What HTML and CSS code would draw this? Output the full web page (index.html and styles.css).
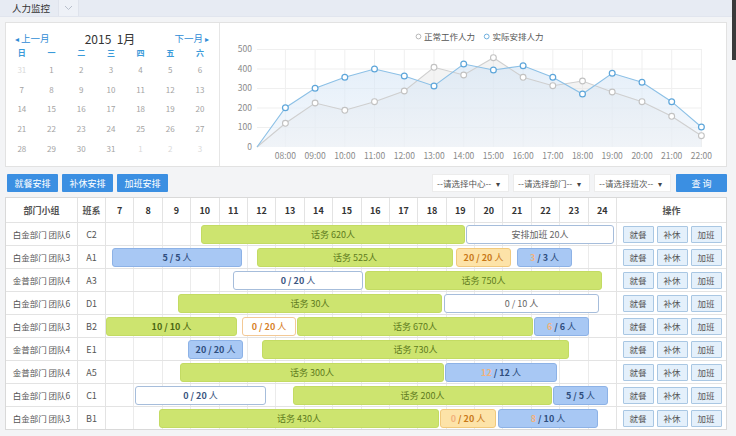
FILE: index.html
```html
<!DOCTYPE html>
<html lang="zh-CN">
<head>
<meta charset="utf-8">
<title>人力监控</title>
<link rel="stylesheet" href="styles.css">
</head>
<body>
<div class="topbar">
  <div class="tab">人力监控</div>
  <div class="tab-more">
    <svg width="9" height="6" viewBox="0 0 9 6"><path d="M1 1l3.5 3.5L8 1" fill="none" stroke="#b9c0cc" stroke-width="1"/></svg>
  </div>
</div>
<div class="scroll-thumb"></div>

<div class="main">
  <section class="panel">
    <div class="calendar">
      <div class="cal-head">
        <span class="cal-nav"><span class="arr">◂</span>上一月</span>
        <span class="cal-title">2015&nbsp; 1月</span>
        <span class="cal-nav">下一月<span class="arr">▸</span></span>
      </div>
      <div class="cal-grid cal-week">
        <span>日</span><span>一</span><span>二</span><span>三</span><span>四</span><span>五</span><span>六</span>
      </div>
      <div class="cal-grid cal-days">
        <span class="other">31</span><span>1</span><span>2</span><span>3</span><span>4</span><span>5</span><span>6</span>
        <span>7</span><span>8</span><span>9</span><span>10</span><span>11</span><span>12</span><span>13</span>
        <span>14</span><span>15</span><span>16</span><span>17</span><span>18</span><span>19</span><span>20</span>
        <span>21</span><span>22</span><span>23</span><span>24</span><span>25</span><span>26</span><span>27</span>
        <span>28</span><span>29</span><span>30</span><span>31</span><span class="other">1</span><span class="other">2</span><span class="other">3</span>
      </div>
    </div>
    <div class="chart">
      <svg class="chart-svg" width="506" height="143" viewBox="220 23 506 143">
        <defs>
          <linearGradient id="areaBlue" x1="0" y1="0" x2="0" y2="1">
            <stop offset="0" stop-color="#d3e4f5"/>
            <stop offset="1" stop-color="#eef4fb"/>
          </linearGradient>
        </defs>
        <!-- legend -->
        <circle cx="418.5" cy="36.5" r="2.4" fill="#fff" stroke="#b8b8b8" stroke-width="1"/>
        <text class="legend" x="424" y="39.7">正常工作人力</text>
        <circle cx="486.7" cy="36.5" r="2.4" fill="#fff" stroke="#6fb0df" stroke-width="1"/>
        <text class="legend" x="492.5" y="39.7">实际安排人力</text>
        <!-- grid -->
        <g stroke="#efefef" stroke-width="1" fill="none">
          <path d="M257 49.5H702M257 69H702M257 88.5H702M257 108H702M257 127.5H702"/>
          <path d="M285.4 49.5V147M315.1 49.5V147M344.8 49.5V147M374.5 49.5V147M404.3 49.5V147M434 49.5V147M463.7 49.5V147M493.4 49.5V147M523.1 49.5V147M552.8 49.5V147M582.5 49.5V147M612.2 49.5V147M642 49.5V147M671.7 49.5V147M701.4 49.5V147"/>
        </g>
        <!-- y axis -->
        <g class="axis" text-anchor="end">
          <text x="252" y="52.3">500</text>
          <text x="252" y="71.8">400</text>
          <text x="252" y="91.3">300</text>
          <text x="252" y="110.8">200</text>
          <text x="252" y="130.3">100</text>
          <text x="252" y="149.8">0</text>
        </g>
        <!-- x axis -->
        <g class="axis" text-anchor="middle">
          <text x="285.4" y="158.8">08:00</text>
          <text x="315.1" y="158.8">09:00</text>
          <text x="344.8" y="158.8">10:00</text>
          <text x="374.5" y="158.8">11:00</text>
          <text x="404.3" y="158.8">12:00</text>
          <text x="434" y="158.8">13:00</text>
          <text x="463.7" y="158.8">14:00</text>
          <text x="493.4" y="158.8">15:00</text>
          <text x="523.1" y="158.8">16:00</text>
          <text x="552.8" y="158.8">17:00</text>
          <text x="582.5" y="158.8">18:00</text>
          <text x="612.2" y="158.8">19:00</text>
          <text x="642" y="158.8">20:00</text>
          <text x="671.7" y="158.8">21:00</text>
          <text x="701.4" y="158.8">22:00</text>
        </g>
        <!-- normal workforce (gray) -->
        <polygon fill="#e4e4e4" fill-opacity="0.45" points="257,147 285.4,123.3 315.1,103 344.8,110.3 374.5,101.7 404.3,91 434,67.3 463.7,75 493.4,57.7 523.1,77.3 552.8,85.7 582.5,81 612.2,92 642,101.7 671.7,116.3 701.4,135.7 701.4,147"/>
        <!-- scheduled workforce (blue) -->
        <polygon fill="url(#areaBlue)" fill-opacity="0.6" points="257,147 285.4,107.7 315.1,88.3 344.8,77.3 374.5,69 404.3,76 434,86 463.7,64 493.4,70 523.1,65.7 552.8,77.3 582.5,94 612.2,73.3 642,82.3 671.7,101.7 701.4,127 701.4,147"/>
        <polyline fill="none" stroke="#cfcfcf" stroke-width="1.1" points="257,147 285.4,123.3 315.1,103 344.8,110.3 374.5,101.7 404.3,91 434,67.3 463.7,75 493.4,57.7 523.1,77.3 552.8,85.7 582.5,81 612.2,92 642,101.7 671.7,116.3 701.4,135.7"/>
        <polyline fill="none" stroke="#8cc0e6" stroke-width="1.1" points="257,147 285.4,107.7 315.1,88.3 344.8,77.3 374.5,69 404.3,76 434,86 463.7,64 493.4,70 523.1,65.7 552.8,77.3 582.5,94 612.2,73.3 642,82.3 671.7,101.7 701.4,127"/>
        <g fill="#fff" stroke="#c2c2c2" stroke-width="1.1">
          <circle cx="285.4" cy="123.3" r="2.9"/><circle cx="315.1" cy="103" r="2.9"/><circle cx="344.8" cy="110.3" r="2.9"/>
          <circle cx="374.5" cy="101.7" r="2.9"/><circle cx="404.3" cy="91" r="2.9"/><circle cx="434" cy="67.3" r="2.9"/>
          <circle cx="463.7" cy="75" r="2.9"/><circle cx="493.4" cy="57.7" r="2.9"/><circle cx="523.1" cy="77.3" r="2.9"/>
          <circle cx="552.8" cy="85.7" r="2.9"/><circle cx="582.5" cy="81" r="2.9"/><circle cx="612.2" cy="92" r="2.9"/>
          <circle cx="642" cy="101.7" r="2.9"/><circle cx="671.7" cy="116.3" r="2.9"/><circle cx="701.4" cy="135.7" r="2.9"/>
        </g>
        <g fill="#fff" stroke="#5ea6da" stroke-width="1.2">
          <circle cx="285.4" cy="107.7" r="2.9"/><circle cx="315.1" cy="88.3" r="2.9"/><circle cx="344.8" cy="77.3" r="2.9"/>
          <circle cx="374.5" cy="69" r="2.9"/><circle cx="404.3" cy="76" r="2.9"/><circle cx="434" cy="86" r="2.9"/>
          <circle cx="463.7" cy="64" r="2.9"/><circle cx="493.4" cy="70" r="2.9"/><circle cx="523.1" cy="65.7" r="2.9"/>
          <circle cx="552.8" cy="77.3" r="2.9"/><circle cx="582.5" cy="94" r="2.9"/><circle cx="612.2" cy="73.3" r="2.9"/>
          <circle cx="642" cy="82.3" r="2.9"/><circle cx="671.7" cy="101.7" r="2.9"/><circle cx="701.4" cy="127" r="2.9"/>
        </g>
      </svg>
    </div>
  </section>

  <div class="toolbar">
    <div class="actions">
      <button class="btn">就餐安排</button>
      <button class="btn">补休安排</button>
      <button class="btn">加班安排</button>
    </div>
    <div class="filters">
      <div class="select">--请选择中心--<span class="caret">▾</span></div>
      <div class="select">--请选择部门--<span class="caret">▾</span></div>
      <div class="select">--请选择班次--<span class="caret">▾</span></div>
      <button class="btn btn-query">查 询</button>
    </div>
  </div>

  <div class="table">
    <div class="trow thead">
      <div class="cell">部门小组</div>
      <div class="cell">班系</div>
      <div class="hours">
        <span>7</span><span>8</span><span>9</span><span>10</span><span>11</span><span>12</span><span>13</span><span>14</span><span>15</span>
        <span>16</span><span>17</span><span>18</span><span>19</span><span>20</span><span>21</span><span>22</span><span>23</span><span>24</span>
      </div>
      <div class="cell">操作</div>
    </div>

    <div class="trow">
      <div class="cell name">白金部门 团队6</div>
      <div class="cell">C2</div>
      <div class="lane">
        <div class="hours"><span></span><span></span><span></span><span></span><span></span><span></span><span></span><span></span><span></span><span></span><span></span><span></span><span></span><span></span><span></span><span></span><span></span><span></span></div>
        <div class="bar green" style="left:95px;width:264px">话务 620人</div>
        <div class="bar white plain" style="left:360px;width:148px">安排加班 20人</div>
      </div>
      <div class="cell ops"><button>就餐</button><button>补休</button><button>加班</button></div>
    </div>

    <div class="trow">
      <div class="cell name">白金部门 团队3</div>
      <div class="cell">A1</div>
      <div class="lane">
        <div class="hours"><span></span><span></span><span></span><span></span><span></span><span></span><span></span><span></span><span></span><span></span><span></span><span></span><span></span><span></span><span></span><span></span><span></span><span></span></div>
        <div class="bar blue" style="left:6px;width:130px">5 / 5 <i>人</i></div>
        <div class="bar green" style="left:151px;width:196px">话务 525人</div>
        <div class="bar orange" style="left:350px;width:55px">20 / 20 <i>人</i></div>
        <div class="bar blue" style="left:411px;width:55px"><em>3</em>&nbsp;/ 3 <i>人</i></div>
      </div>
      <div class="cell ops"><button>就餐</button><button>补休</button><button>加班</button></div>
    </div>

    <div class="trow">
      <div class="cell name">金普部门 团队4</div>
      <div class="cell">A3</div>
      <div class="lane">
        <div class="hours"><span></span><span></span><span></span><span></span><span></span><span></span><span></span><span></span><span></span><span></span><span></span><span></span><span></span><span></span><span></span><span></span><span></span><span></span></div>
        <div class="bar white" style="left:127px;width:130px">0 / 20 <i>人</i></div>
        <div class="bar green" style="left:259px;width:237px">话务 750人</div>
      </div>
      <div class="cell ops"><button>就餐</button><button>补休</button><button>加班</button></div>
    </div>

    <div class="trow">
      <div class="cell name">白金部门 团队6</div>
      <div class="cell">D1</div>
      <div class="lane">
        <div class="hours"><span></span><span></span><span></span><span></span><span></span><span></span><span></span><span></span><span></span><span></span><span></span><span></span><span></span><span></span><span></span><span></span><span></span><span></span></div>
        <div class="bar green" style="left:72px;width:264px">话务 30人</div>
        <div class="bar white plain" style="left:338px;width:155px">0 / 10 人</div>
      </div>
      <div class="cell ops"><button>就餐</button><button>补休</button><button>加班</button></div>
    </div>

    <div class="trow">
      <div class="cell name">白金部门 团队3</div>
      <div class="cell">B2</div>
      <div class="lane">
        <div class="hours"><span></span><span></span><span></span><span></span><span></span><span></span><span></span><span></span><span></span><span></span><span></span><span></span><span></span><span></span><span></span><span></span><span></span><span></span></div>
        <div class="bar green strong" style="left:0;width:131px">10 / 10 <i>人</i></div>
        <div class="bar white warn" style="left:136px;width:54px">0 / 20 <i>人</i></div>
        <div class="bar green" style="left:191px;width:236px">话务 670人</div>
        <div class="bar blue" style="left:428px;width:55px"><em>6</em>&nbsp;/ 6<i>人</i></div>
      </div>
      <div class="cell ops"><button>就餐</button><button>补休</button><button>加班</button></div>
    </div>

    <div class="trow">
      <div class="cell name">金普部门 团队4</div>
      <div class="cell">E1</div>
      <div class="lane">
        <div class="hours"><span></span><span></span><span></span><span></span><span></span><span></span><span></span><span></span><span></span><span></span><span></span><span></span><span></span><span></span><span></span><span></span><span></span><span></span></div>
        <div class="bar blue" style="left:82px;width:55px">20 / 20 <i>人</i></div>
        <div class="bar green" style="left:156px;width:307px">话务 730人</div>
      </div>
      <div class="cell ops"><button>就餐</button><button>补休</button><button>加班</button></div>
    </div>

    <div class="trow">
      <div class="cell name">金普部门 团队4</div>
      <div class="cell">A5</div>
      <div class="lane">
        <div class="hours"><span></span><span></span><span></span><span></span><span></span><span></span><span></span><span></span><span></span><span></span><span></span><span></span><span></span><span></span><span></span><span></span><span></span><span></span></div>
        <div class="bar green" style="left:74px;width:264px">话务 300人</div>
        <div class="bar blue" style="left:339px;width:112px"><em>12</em>&nbsp;/ 12 <i>人</i></div>
      </div>
      <div class="cell ops"><button>就餐</button><button>补休</button><button>加班</button></div>
    </div>

    <div class="trow">
      <div class="cell name">白金部门 团队6</div>
      <div class="cell">C1</div>
      <div class="lane">
        <div class="hours"><span></span><span></span><span></span><span></span><span></span><span></span><span></span><span></span><span></span><span></span><span></span><span></span><span></span><span></span><span></span><span></span><span></span><span></span></div>
        <div class="bar white" style="left:29px;width:131px">0 / 20 <i>人</i></div>
        <div class="bar green" style="left:187px;width:259px">话务 200人</div>
        <div class="bar blue" style="left:447px;width:55px">5 / 5 <i>人</i></div>
      </div>
      <div class="cell ops"><button>就餐</button><button>补休</button><button>加班</button></div>
    </div>

    <div class="trow">
      <div class="cell name">白金部门 团队3</div>
      <div class="cell">B1</div>
      <div class="lane">
        <div class="hours"><span></span><span></span><span></span><span></span><span></span><span></span><span></span><span></span><span></span><span></span><span></span><span></span><span></span><span></span><span></span><span></span><span></span><span></span></div>
        <div class="bar green" style="left:53px;width:280px">话务 430人</div>
        <div class="bar orange" style="left:334px;width:56px"><em>0</em>&nbsp;/ 20 <i>人</i></div>
        <div class="bar blue" style="left:392px;width:100px"><em>8</em>&nbsp;/ 10 <i>人</i></div>
      </div>
      <div class="cell ops"><button>就餐</button><button>补休</button><button>加班</button></div>
    </div>
  </div>
</div>
</body>
</html>
```

FILE: styles.css
```css
* {
  box-sizing: border-box;
}

html, body {
  margin: 0;
  padding: 0;
}

body {
  width: 736px;
  height: 436px;
  overflow: hidden;
  position: relative;
  background: #f3f4f6;
  font-family: "Noto Sans CJK SC", "Liberation Sans", sans-serif;
  font-size: 9px;
  color: #555;
}

button {
  font-family: inherit;
  cursor: pointer;
}

/* ---------- top tab bar ---------- */
.topbar {
  height: 17px;
  display: flex;
  background: #e7ebf3;
  border-bottom: 1px solid #e1e5ee;
}

.tab {
  width: 58px;
  padding-left: 12px;
  line-height: 16px;
  font-size: 9.5px;
  color: #333;
}

.tab-more {
  width: 21px;
  display: flex;
  align-items: center;
  justify-content: center;
  background: #eef1f7;
  border-left: 1px solid #dfe3ec;
  border-right: 1px solid #dfe3ec;
}

.scroll-thumb {
  position: absolute;
  top: 0;
  right: 0;
  width: 4px;
  height: 60px;
  background: #3a3a3a;
}

/* ---------- page body ---------- */
.main {
  padding: 5px 9px 0 5px;
}

.panel {
  height: 145px;
  display: flex;
  background: #fff;
  border: 1px solid #e2e2e2;
}

/* ---------- calendar ---------- */
.calendar {
  width: 214px;
  border-right: 1px solid #e6e6e6;
  padding: 7px 2px 0 1px;
}

.cal-head {
  display: flex;
  justify-content: space-between;
  align-items: center;
  height: 16px;
  padding: 0 6px 0 6px;
}

.cal-nav {
  color: #2f8bd6;
  font-size: 9.5px;
}

.cal-nav .arr {
  font-size: 8px;
  margin: 0 2px;
}

.cal-title {
  font-size: 12px;
  color: #333;
  margin-right: 4px;
}

.cal-grid {
  display: grid;
  grid-template-columns: repeat(7, 29.7px);
  text-align: center;
}

.cal-week {
  height: 13px;
  line-height: 13px;
  color: #3a9ad9;
  font-weight: bold;
  font-size: 8px;
}

.cal-days {
  margin-top: 1px;
  grid-auto-rows: 19.7px;
  line-height: 19.7px;
  font-size: 8px;
  color: #a3a3a3;
}

.cal-days .other {
  color: #d9d9d9;
}

/* ---------- chart ---------- */
.chart {
  flex: 1;
  position: relative;
}

.chart-svg {
  display: block;
}

.chart-svg text {
  font-family: "Noto Sans CJK SC", "Liberation Sans", sans-serif;
}

.legend {
  font-size: 8.5px;
  fill: #555;
}

.axis {
  font-size: 8.5px;
  fill: #8a8a8a;
}

/* ---------- toolbar ---------- */
.toolbar {
  margin-top: 7px;
  height: 18px;
  display: flex;
  justify-content: space-between;
}

.actions,
.filters {
  display: flex;
  gap: 4px;
}

.actions {
  padding-left: 2px;
}

.btn {
  width: 51px;
  height: 18px;
  padding: 0;
  border: none;
  border-radius: 1px;
  background: #3b8fe2;
  color: #fff;
  font-size: 9px;
}

.select {
  width: 77px;
  height: 18px;
  display: flex;
  align-items: center;
  padding-left: 4px;
  background: #fff;
  border: 1px solid #ececec;
  color: #555;
  font-size: 8.5px;
  white-space: nowrap;
}

.select .caret {
  margin-left: 5px;
  color: #444;
  font-size: 8px;
}

.btn-query {
  margin-left: 1px;
}

/* ---------- gantt table ---------- */
.table {
  margin-top: 5px;
  width: 722px;
  background: #fff;
  border: 1px solid #d9d9d9;
}

.trow {
  display: grid;
  grid-template-columns: 72px 28px 511px 109px;
  height: 23px;
  border-bottom: 1px solid #e3e3e3;
}

.trow:last-child {
  border-bottom: none;
  height: 22px;
}

.cell {
  display: flex;
  align-items: center;
  justify-content: center;
  border-right: 1px solid #e3e3e3;
  color: #555;
  white-space: nowrap;
}

.cell.name {
  font-size: 8.5px;
}

.trow .cell:last-child {
  border-right: none;
}

.hours {
  display: grid;
  grid-template-columns: repeat(18, 1fr);
  height: 100%;
}

.hours span {
  border-right: 1px solid #ebebeb;
}

.hours span:last-child {
  border-right-color: #e3e3e3;
}

.thead {
  height: 25px;
  font-weight: bold;
  color: #333;
}

.thead .hours span {
  display: flex;
  align-items: center;
  justify-content: center;
  border-right-color: #e3e3e3;
}

.lane {
  position: relative;
}

.bar {
  position: absolute;
  top: 2px;
  height: 19px;
  display: flex;
  align-items: center;
  justify-content: center;
  border-radius: 3px;
  white-space: nowrap;
  font-size: 9px;
}

.bar i {
  font-style: normal;
  font-weight: normal;
  margin-left: 2px;
}

.bar em {
  font-style: normal;
  color: #f2b27c;
}

.bar.green {
  background: #cde46f;
  border: 1px solid #c3db63;
  color: #5d7b1d;
}

.bar.green.strong {
  font-weight: bold;
  color: #4c6812;
}

.bar.blue {
  background: #a8c8f4;
  border: 1px solid #8db2e6;
  color: #2f4e7e;
  font-weight: bold;
}

.bar.orange {
  background: #fde3a8;
  border: 1px solid #f1c97c;
  color: #c97918;
  font-weight: bold;
}

.bar.white {
  background: #fff;
  border: 1px solid #a6bddb;
  color: #3b557f;
  font-weight: bold;
}

.bar.white.plain {
  color: #666;
  font-weight: normal;
}

.bar.white.warn {
  border-color: #f3c996;
  color: #d7822a;
}

.ops {
  gap: 3px;
  padding-left: 1px;
}

.ops button {
  width: 31px;
  height: 17px;
  padding: 0;
  background: #e4f0fb;
  border: 1px solid #a9c7e3;
  border-radius: 1px;
  color: #555;
  font-size: 8.5px;
}
```
